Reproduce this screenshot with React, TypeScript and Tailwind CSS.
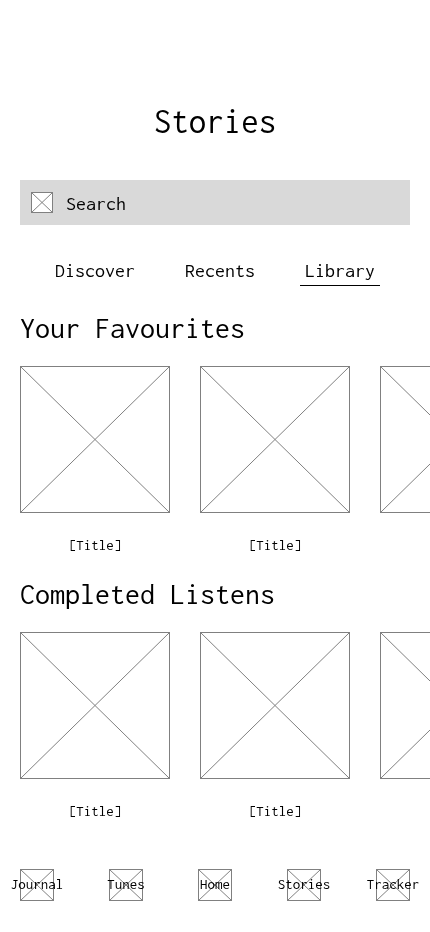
import React from "react";

type CrossProps = { className: string; width: number; height: number };

function Placeholder({ className, width, height }: CrossProps) {
  return (
    <svg
      className={className}
      viewBox={`0 0 ${width} ${height}`}
      fill="white"
      stroke="#808080"
      strokeWidth="1"
      aria-hidden="true"
    >
      <rect x="0.5" y="0.5" width={width - 1} height={height - 1} />
      <path d={`M0.5 0.5L${width - 0.5} ${height - 0.5}M${width - 0.5} 0.5L0.5 ${height - 0.5}`} />
    </svg>
  );
}

const tabs = ["Discover", "Recents", "Library"];
const navItems = ["Journal", "Tunes", "Home", "Stories", "Tracker"];

function Shelf({ heading, titles }: { heading: string; titles: string[] }) {
  return (
    <section className="mb-[25px]">
      <h2 className="px-5 text-[30px] leading-8">{heading}</h2>
      <ul className="mt-[22px] flex gap-[30px] overflow-hidden pl-5">
        {titles.map((title, i) => (
          <li key={i} className="flex shrink-0 flex-col items-center">
            <Placeholder className="h-[147px] w-[150px]" width={150} height={147} />
            {title && <span className="mt-6 text-[15px] leading-4">{title}</span>}
          </li>
        ))}
      </ul>
    </section>
  );
}

export default function App() {
  return (
    <div className="min-h-screen overflow-hidden font-['Inconsolata','Noto_Sans_Mono_CJK_SC','Liberation_Mono',monospace] font-normal text-black antialiased will-change-transform">
      <header className="pt-[102px]">
        <h1 className="text-center text-[35px] leading-10">Stories</h1>
      </header>

      <label className="mx-5 mt-[38px] flex h-[45px] items-center bg-[#d9d9d9] pl-[11px]">
        <Placeholder className="h-[21px] w-[22px] shrink-0" width={22} height={21} />
        <input
          type="search"
          aria-label="Search"
          placeholder="Search"
          className="ml-[13px] min-w-0 flex-1 bg-transparent pt-0.5 text-[20px] leading-6 outline-none placeholder:text-black"
        />
      </label>

      <div role="tablist" className="mt-[34px] flex justify-center gap-10">
        {tabs.map((tab) => (
          <button
            key={tab}
            type="button"
            role="tab"
            aria-selected={tab === "Library"}
            className="border-b border-transparent px-[5px] pb-0.5 text-[20px] leading-6 aria-selected:border-black"
          >
            {tab}
          </button>
        ))}
      </div>

      <main className="mt-[26px]">
        <Shelf heading="Your Favourites" titles={["[Title]", "[Title]", ""]} />
        <Shelf heading="Completed Listens" titles={["[Title]", "[Title]", ""]} />
      </main>

      <nav className="mt-[50px] flex justify-between px-5 pb-[31px]">
        {navItems.map((item) => (
          <a key={item} href={`#${item.toLowerCase()}`} className="relative">
            <Placeholder className="h-8 w-[34px]" width={34} height={32} />
            <span className="absolute inset-0 flex items-center justify-center pb-0.5 text-[15px] leading-4">
              {item}
            </span>
          </a>
        ))}
      </nav>
    </div>
  );
}
